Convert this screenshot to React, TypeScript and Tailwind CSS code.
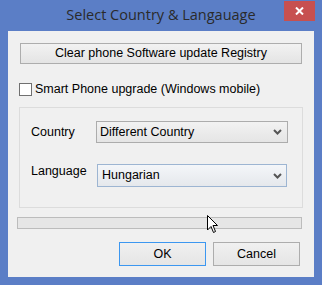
import React from "react";

const ui = { fontFamily: '"Liberation Sans", Arial, sans-serif' };

function Chevron() {
  return (
    <svg width="9" height="6" viewBox="0 0 9 6" className="shrink-0">
      <path d="M1 1 L4.5 4.5 L8 1" fill="none" stroke="#555" strokeWidth="2" />
    </svg>
  );
}

export default function App() {
  return (
    <div className="relative w-[322px] h-[285px] bg-[#5b7ec6] flex flex-col overflow-hidden" style={ui}>
      {/* title bar */}
      <div className="relative h-[31px] shrink-0 flex items-center justify-center">
        <span
          className="text-[14.5px] text-[#2a2a2a] leading-none pb-[1px]"
          style={{ fontFamily: '"Open Sans", "Noto Sans", sans-serif' }}
        >
          Select Country &amp; Langauage
        </span>
        <div className="absolute left-[284px] top-[1px] w-[31px] h-[20px] bg-[#c75050] flex items-center justify-center">
          <svg width="9" height="8" viewBox="0 0 9 8">
            <path d="M1 0.5 L8 7.5 M8 0.5 L1 7.5" stroke="#fff" strokeWidth="2" />
          </svg>
        </div>
      </div>

      {/* client */}
      <div className="mx-[8px] h-[246px] bg-[#f0f0f0] flex flex-col text-[12.5px] text-black">
        <div className="mt-[12px] mx-[12px] h-[21px] border border-[#adadad] bg-gradient-to-b from-[#f2f2f2] to-[#e4e4e4] flex items-center justify-center">
          Clear phone Software update Registry
        </div>

        <div className="mt-[18px] ml-[11px] flex items-center h-[14px]">
          <div className="w-[13px] h-[13px] border border-[#707070] bg-white" />
          <span className="ml-[3px]">Smart Phone upgrade (Windows mobile)</span>
        </div>

        <div className="mt-[11px] mx-[11px] h-[101px] border border-[#dcdcdc] flex flex-col">
          <div className="mt-[13px] flex items-center">
            <span className="ml-[11px] w-[65px]">Country</span>
            <div className="w-[192px] h-[22px] border border-[#acacac] bg-gradient-to-b from-[#f2f2f2] to-[#e5e5e5] flex items-center pl-[3px] pr-[5px]">
              <span className="flex-1">Different Country</span>
              <Chevron />
            </div>
          </div>
          <div className="mt-[21px] flex items-center">
            <span className="ml-[11px] w-[66px] -mt-[8px]">Language</span>
            <div className="w-[190px] h-[23px] border border-[#9db5d2] bg-gradient-to-b from-[#f4f6f9] to-[#e5e8ec] flex items-center pl-[4px] pr-[4px]">
              <span className="flex-1">Hungarian</span>
              <Chevron />
            </div>
          </div>
        </div>

        <div className="mt-[9px] ml-[9px] mr-[12px] h-[12px] border border-[#bcbcbc] bg-[#e6e6e6]" />

        <div className="mt-[13px] mr-[14px] flex justify-end gap-[7px]">
          <div className="w-[87px] h-[24px] border border-[#3c97f0] bg-gradient-to-b from-[#f0f0f0] to-[#e5e5e5] flex items-center justify-center">
            OK
          </div>
          <div className="w-[87px] h-[24px] border border-[#adadad] bg-gradient-to-b from-[#f0f0f0] to-[#e5e5e5] flex items-center justify-center">
            Cancel
          </div>
        </div>
      </div>

      {/* mouse cursor */}
      <svg className="absolute left-[206px] top-[214px]" width="13" height="20" viewBox="0 0 13 20">
        <path
          d="M1.5 1.5 L1.5 16 L5 12.5 L7.5 18.5 L9.5 17.5 L7 11.5 L11.5 11.5 Z"
          fill="#fff"
          stroke="#000"
          strokeWidth="1"
          strokeLinejoin="miter"
        />
      </svg>
    </div>
  );
}
